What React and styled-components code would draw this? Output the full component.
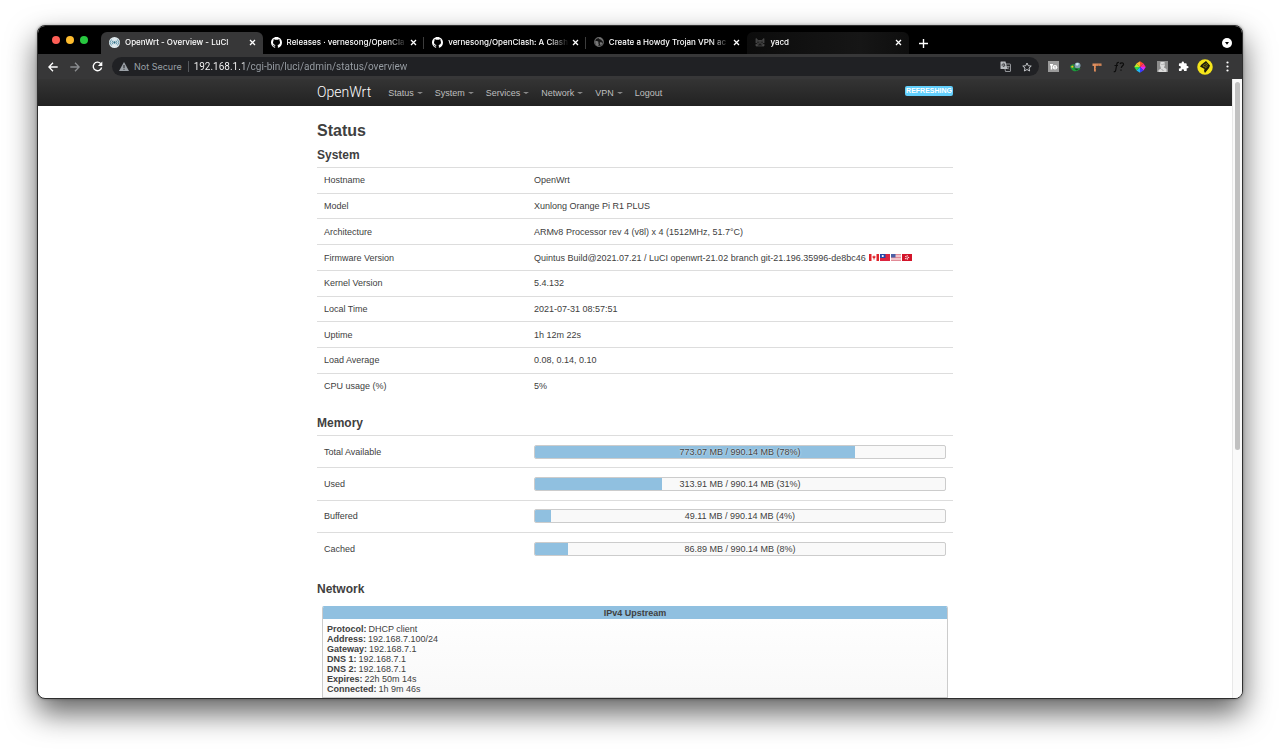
import React from "react";
import styled, { createGlobalStyle } from "styled-components";

const sans = '"Liberation Sans", Helvetica, Arial, sans-serif';
const ui = 'Inter, "Liberation Sans", sans-serif';

const GlobalStyle = createGlobalStyle`
  * { box-sizing: border-box; }
  body { margin: 0; background: #fff; font-family: ${sans}; font-size: 9px; line-height: 12px; color: #404040; }
  button { border: 0; padding: 0; margin: 0; background: none; color: inherit; font: inherit; cursor: pointer; }
  svg { display: block; }
  a { color: inherit; text-decoration: none; }
`;

const Desktop = styled.div`
  height: 100vh;
  padding: 25px 37px 50px;
  overflow: hidden;
`;

const Window = styled.div`
  display: flex;
  flex-direction: column;
  height: 100%;
  border: 1px solid #2e2e2e;
  border-radius: 8px;
  overflow: hidden;
  background: #fff;
  box-shadow: 0 14px 30px rgba(0, 0, 0, 0.62), 0 0 3px rgba(0, 0, 0, 0.35);
`;

const TabStrip = styled.header`
  flex: none;
  display: flex;
  align-items: flex-end;
  height: 28px;
  background: #000;
  color: #fff;
  font-family: ${ui};
`;

const Lights = styled.div`
  display: flex;
  gap: 6px;
  width: 63px;
  padding: 0 0 10px 14px;
`;

const Light = styled.button`
  width: 8px;
  height: 8px;
  border-radius: 50%;
  background: ${(p) => p.$color};
`;

const Tabs = styled.div`
  display: flex;
  flex: 0 1 808px;
`;

const tabBackground = {
  active: "#373738",
  hover: "linear-gradient(to right, #0c0c0c, #161616 70%, #0e0e0e)",
  idle: "transparent",
};

const Tab = styled.div`
  position: relative;
  flex: 1;
  min-width: 0;
  display: flex;
  align-items: center;
  height: 22px;
  padding: 0 6px 2px 8px;
  border-radius: 6px 6px 0 0;
  background: ${(p) => tabBackground[p.$state]};
`;

const TabDivider = styled.i`
  position: absolute;
  right: 0;
  top: 5px;
  width: 1px;
  height: 12px;
  background: #3c3c3c;
`;

const TabTitle = styled.button`
  flex: 1;
  min-width: 0;
  display: flex;
  align-items: center;
  gap: 5px;
  font-weight: 500;
  font-size: 8px;
  line-height: 14px;
  text-align: left;

  span {
    flex: 1;
    overflow: hidden;
    white-space: nowrap;
    margin-right: 2px;
    mask-image: linear-gradient(to right, #000 calc(100% - 20px), transparent);
  }
  svg { flex: none; }
`;

const IconButton = styled.button`
  flex: none;
  display: flex;
  align-items: center;
  justify-content: center;
  width: ${(p) => p.$width || 22}px;
  height: ${(p) => p.$height || 22}px;
  color: ${(p) => p.$color || "#fff"};
`;

const StripEnd = styled.div`
  flex: 1;
  display: flex;
  justify-content: space-between;
  padding: 0 4px 0 3px;
`;

const Toolbar = styled.div`
  flex: none;
  display: flex;
  align-items: center;
  height: 25px;
  padding: 0 4px;
  background: #373738;
  font-family: ${ui};
`;

const AddressBar = styled.form`
  flex: 1;
  min-width: 0;
  display: flex;
  align-items: center;
  height: 19px;
  margin: 0 4px;
  padding: 0 1px 0 7px;
  border-radius: 10px;
  background: #202124;
  color: #9aa0a6;
  font-size: 9px;
`;

const Security = styled.button`
  display: flex;
  align-items: center;
  gap: 5px;
  padding-right: 6px;
  border-right: 1px solid #55585c;
  line-height: 11px;
  white-space: nowrap;
`;

const Url = styled.input`
  flex: 1;
  min-width: 0;
  margin-left: 5px;
  padding: 0;
  border: 0;
  outline: 0;
  font: 10px/14px Roboto, sans-serif;
  color: #9aa0a6;
  background: linear-gradient(to right, #fff 50px, #9aa0a6 50px);
  background-clip: text;
  -webkit-text-fill-color: transparent;
`;

const Extensions = styled.div`
  flex: 0 0 195px;
  display: grid;
  grid-template-columns: repeat(9, 1fr);
  justify-items: center;
`;

const Viewport = styled.div`
  flex: 1;
  min-height: 0;
  display: flex;
`;

const Page = styled.div`
  flex: 1;
  min-width: 0;
  overflow: hidden;
`;

const ScrollTrack = styled.div`
  flex: none;
  width: 10px;
  padding: 3px 2px;
  border-left: 1px solid #e8e8e8;
  background: #fafafa;
`;

const ScrollThumb = styled.div`
  height: 60%;
  width: 5px;
  border-radius: 3px;
  background: #c1c1c1;
`;

const NavBar = styled.nav`
  height: 27px;
  background: linear-gradient(#343434, #222);
  color: #bfbfbf;
`;

const Container = styled.div`
  display: flex;
  align-items: center;
  width: 636px;
  max-width: 100%;
  height: 100%;
  margin: 0 auto;
`;

const Brand = styled.a`
  margin-right: 17px;
  padding-bottom: 2px;
  font: 300 14px/20px Roboto, sans-serif;
  color: #fff;
`;

const Menu = styled.ul`
  flex: 1;
  display: flex;
  gap: 12px;
  margin: 0;
  padding: 0;
  list-style: none;
`;

const MenuLink = styled.a`
  display: flex;
  align-items: center;
  gap: 3px;
`;

const Caret = styled.i`
  border: solid transparent;
  border-width: 2px 3px 0;
  border-top-color: #8a8a8a;
`;

const Badge = styled.button`
  padding: 0 1px;
  border-radius: 2px;
  background: #62cffc;
  color: #fff;
  font-weight: 700;
  font-size: 7px;
  line-height: 10px;
  margin-bottom: 3px;
`;

const Main = styled.main`
  width: 636px;
  max-width: 100%;
  margin: 0 auto;
  padding-top: 12px;
`;

const Title = styled.h2`
  margin: 0;
  font-size: 16px;
  line-height: 25px;
`;

const Section = styled.section`
  margin-bottom: 13px;
`;

const Heading = styled.h3`
  margin: 0;
  font-size: 12px;
  line-height: 24px;
`;

const Table = styled.table`
  width: 100%;
  height: ${(p) => p.$height}px;
  border-collapse: collapse;
  table-layout: fixed;

  th, td {
    padding: 0 7px;
    border-top: 1px solid #ddd;
    font-weight: 400;
    text-align: left;
    vertical-align: middle;
  }
  th { width: 33%; }
`;

const Value = styled.div`
  display: flex;
  align-items: center;
  gap: 3px;
`;

const Flags = styled.span`
  display: flex;
  gap: 1px;
`;

const Meter = styled.div`
  position: relative;
  height: 14px;
  border: 1px solid #ccc;
  border-radius: 2px;
  background: #f9f9f9;
  overflow: hidden;
`;

const MeterFill = styled.div`
  height: 100%;
  background: #90c0e0;
`;

const MeterText = styled.span`
  position: absolute;
  inset: 0;
  text-align: center;
  text-shadow: 0 0 2px #fff;
`;

const IfaceBox = styled.div`
  margin: 5px 5px 0;
  border: 1px solid #ccc;
  border-top-color: #90c0e0;
  border-radius: 2px 2px 0 0;
  background: linear-gradient(#fff, #f7f7f7);
`;

const IfaceHead = styled.div`
  background: #90c0e0;
  border-radius: 1px 1px 0 0;
  font-weight: 700;
  text-align: center;
`;

const IfaceList = styled.dl`
  margin: 0;
  padding: 5px 4px 3px;
  line-height: 10px;

  dt { font-weight: 700; }
  dd { margin: 0; }
  div { display: flex; gap: 2px; }
`;

const IfaceFoot = styled.div`
  height: 20px;
  border-top: 1px solid #ccc;
`;

const CloseIcon = () => (
  <svg width="7" height="7" viewBox="0 0 7 7" stroke="currentColor" strokeWidth="1.3" fill="none">
    <path d="M1 1l5 5M6 1l-5 5" />
  </svg>
);

const OpenWrtIcon = () => (
  <svg width="11" height="11" viewBox="0 0 24 24" fill="none">
    <circle cx="12" cy="12" r="12" fill="#dfe9ee" />
    <circle cx="12" cy="12" r="2.5" fill="#2f6f86" />
    <path d="M8.5 8a6 6 0 0 0 0 8M15.500 8a6 6 0 0 1 0 8M5.500 5.500a9.500 9.500 0 0 0 0 13M18.500 5.500a9.500 9.500 0 0 1 0 13" stroke="#4d8ba1" strokeWidth="1.800" />
  </svg>
);

const GithubIcon = () => (
  <svg width="11" height="11" viewBox="0 0 16 16" fill="#fff">
    <path d="M8 0C3.580 0 0 3.580 0 8c0 3.540 2.290 6.530 5.470 7.590.4.070.55-.17.55-.38 0-.19-.01-.82-.01-1.490-2.010.37-2.530-.49-2.690-.94-.09-.23-.48-.94-.82-1.130-.28-.15-.68-.52-.01-.53.63-.01 1.080.58 1.230.82.72 1.210 1.870.87 2.330.66.07-.52.28-.87.51-1.070-1.780-.2-3.640-.89-3.640-3.950 0-.87.31-1.590.82-2.150-.08-.2-.36-1.020.08-2.120 0 0 .67-.21 2.200.82a7.600 7.600 0 0 1 4 0c1.530-1.040 2.200-.82 2.200-.82.44 1.100.16 1.920.08 2.120.51.56.82 1.270.82 2.150 0 3.070-1.870 3.750-3.650 3.950.29.25.54.73.54 1.480 0 1.070-.01 1.930-.01 2.200 0 .21.15.46.55.38A8 8 0 0 0 16 8c0-4.420-3.580-8-8-8z" />
  </svg>
);

const GlobeIcon = () => (
  <svg width="10" height="10" viewBox="0 0 24 24">
    <circle cx="12" cy="12" r="10.500" fill="#151515" stroke="#6a6a6a" strokeWidth="2.500" />
    <path d="M3 9c3 1 5 0 7 2s-1 3 1 5-1 4-2 6c-4-2-7-6-6-13zM12 2c0 3 1 4 4 4s2 3 4 4 2-1 2 2C22 6 18 2 12 2zM14 13c3-1 5 1 7 2l-4 5c-2-1-4-5-3-7z" fill="#777" />
  </svg>
);

const CatIcon = () => (
  <svg width="10" height="10" viewBox="0 0 20 20">
    <path d="M2 18V3l4.500 4h7L18 3v15z" fill="#3a3a3a" stroke="#5c5c5c" strokeWidth="1.200" />
    <path d="M6 9.500v2.500M14 9.500v2.500M0 13h4M16 13h4M8 18v-3l2-1 2 1v3" fill="none" stroke="#0c0c0c" strokeWidth="1.600" />
  </svg>
);

const PlusIcon = () => (
  <svg width="9" height="9" viewBox="0 0 9 9" stroke="#fff" strokeWidth="1.400">
    <path d="M4.500 0v9M0 4.500h9" />
  </svg>
);

const TabSearchIcon = () => (
  <svg width="10" height="10" viewBox="0 0 10 10">
    <circle cx="5" cy="5" r="5" fill="#fff" />
    <path d="M3 4h4L5 6.700z" fill="#000" />
  </svg>
);

const Arrow = ({ back }) => (
  <svg width="10" height="10" viewBox="0 0 10 10" fill="none" stroke="currentColor" strokeWidth="1.300">
    <path d={back ? "M9.700 5H1M5 .8L.9 5 5 9.200" : "M.3 5H9M5 .8L9.100 5 5 9.200"} />
  </svg>
);

const ReloadIcon = () => (
  <svg width="11" height="11" viewBox="0 0 16 16" fill="none" stroke="currentColor" strokeWidth="2">
    <path d="M14 9.500A6.200 6.200 0 1 1 12.700 3.800" />
    <path d="M15 .8v6.400H8.600z" fill="currentColor" stroke="none" />
  </svg>
);

const WarningIcon = () => (
  <svg width="10" height="9" viewBox="0 0 20 18">
    <path d="M10 0l10 18H0z" fill="#9aa0a6" />
    <path d="M9 6h2v6H9zM9 13.500h2v2H9z" fill="#202124" />
  </svg>
);

const TranslateIcon = () => (
  <svg width="11" height="11" viewBox="0 0 22 22">
    <path d="M8 6h12a1 1 0 0 1 1 1v13a1 1 0 0 1-1 1h-9z" fill="none" stroke="#b9bcc0" strokeWidth="1.500" />
    <path d="M2 1h9l4 15H2a1 1 0 0 1-1-1V2a1 1 0 0 1 1-1z" fill="#b9bcc0" />
    <path d="M10 7H6.500M9.500 6A3 3 0 1 0 10 9H7" fill="none" stroke="#202124" strokeWidth="1.300" />
    <path d="M13 11h6M16 9.500V11M18 11c0 2-2 4-4 5M15 13l3 4" fill="none" stroke="#b9bcc0" strokeWidth="1.200" />
  </svg>
);

const StarIcon = () => (
  <svg width="10" height="10" viewBox="0 0 20 20" fill="none" stroke="#d4d6d9" strokeWidth="1.800">
    <path d="M10 2l2.500 5.500 6 .6-4.500 4 1.300 5.900L10 15l-5.300 3L6 12.100l-4.500-4 6-.6z" />
  </svg>
);

const FeedBadge = () => (
  <svg width="11" height="11" viewBox="0 0 22 22">
    <rect width="22" height="22" fill="#9b9b9b" />
    <path d="M4 6h6v3H8.500v8h-3V9H4z" fill="#fff" />
    <circle cx="14" cy="12.500" r="4.500" fill="#fff" />
    <path d="M12 11.500h4M13 14h3" stroke="#9b9b9b" strokeWidth="1.300" />
  </svg>
);

const DownloadGlobe = () => (
  <svg width="11" height="10" viewBox="0 0 22 20">
    <circle cx="15" cy="7" r="6" fill="#7d9fae" />
    <path d="M11 4c3-3 6-2 7 0l-4 4z" fill="#cfe6ef" />
    <path d="M0 10c1-4 5-6 9-5l-2 3 5 5 9-1c-2 6-12 9-17 4z" fill="#1c9a3c" />
    <path d="M2 9l4-2 1 3-3 2z" fill="#f1c21b" />
    <path d="M8 13l9 1-4 3z" fill="#0a4d1c" />
  </svg>
);

const RulerIcon = () => (
  <svg width="10" height="10" viewBox="0 0 20 20">
    <path d="M1 3h18v5H8v11H4V8H1z" fill="#dd8e5e" />
    <path d="M10 5v3M13 5v3M16 5v3M6 10h2M6 13h2M6 16h2" stroke="#7c4222" />
  </svg>
);

const FontIcon = () => (
  <svg width="12" height="12" viewBox="0 0 24 24" fill="none" stroke="#0d0d0d" strokeWidth="2.400">
    <path d="M12 3c-3-1-4 1-4.500 4L5.500 18c-.5 3-2 4-4 3M3 9h7M14 6c1-3 8-3 7 1-.6 2.500-4 3-4.500 7M16 17v2.500" />
  </svg>
);

const wheel = ["#ff4a2b", "#ff2b8a", "#d42bff", "#3b3bff", "#21b6f8", "#2bd94a", "#b8ea2b", "#ffb22b"];
const ColorWheel = () => (
  <svg width="12" height="12" viewBox="-12 -12 24 24">
    {wheel.map((c, i) => (
      <path key={c} d={i % 2 ? "M0 0L-7-7L0-11.500z" : "M0 0L0-11.500L7-7z"} fill={c} transform={`rotate(${Math.ceil(i / 2) * 90})`} />
    ))}
  </svg>
);

const GhostIcon = () => (
  <svg width="11" height="11" viewBox="0 0 22 22">
    <rect width="22" height="22" fill="#8d8d8d" />
    <path d="M7 2h8l1 6-2 5 5 3v6H3v-4l5-3-2-6z" fill="#dcdcdc" />
    <path d="M9 6l2 2M14 5v3M9 17l4 2" stroke="#8d8d8d" strokeWidth="1.500" />
  </svg>
);

const PuzzleIcon = () => (
  <svg width="11" height="11" viewBox="0 0 24 24" fill="#fff">
    <path d="M20.500 11H19V7a2 2 0 0 0-2-2h-4V3.500a2.500 2.500 0 0 0-5 0V5H4a2 2 0 0 0-2 2v3.800h1.500a2.700 2.700 0 0 1 0 5.400H2V20a2 2 0 0 0 2 2h3.800v-1.500a2.700 2.700 0 0 1 5.400 0V22H17a2 2 0 0 0 2-2v-4h1.500a2.500 2.500 0 0 0 0-5z" />
  </svg>
);

const Avatar = () => (
  <svg width="16" height="16" viewBox="0 0 32 32">
    <circle cx="16" cy="16" r="15.500" fill="#f5e51b" />
    <path d="M18 4l8 9-2 5-8 10-2-4 1-4-9-5 3-4z" fill="#1d1b0a" />
    <path d="M12 13l7-4 2 3-7 4zM16 18l5-3" stroke="#8d8412" strokeWidth="1.500" fill="none" />
  </svg>
);

const DotsIcon = () => (
  <svg width="3" height="11" viewBox="0 0 3 11" fill="#fff">
    <circle cx="1.500" cy="1.500" r="1.100" />
    <circle cx="1.500" cy="5.500" r="1.100" />
    <circle cx="1.500" cy="9.500" r="1.100" />
  </svg>
);

const FlagCanada = () => (
  <svg width="10" height="7" viewBox="0 0 20 14">
    <path fill="#fff" d="M0 0h20v14H0z" />
    <path fill="#e0242c" d="M0 0h5v14H0zM15 0h5v14h-5zM10 2l1 2.500L13.500 5 12 8.500l-1.500.5v3h-1V9L8 8.500 6.500 5 9 4.500z" />
  </svg>
);

const FlagTaiwan = () => (
  <svg width="10" height="7" viewBox="0 0 20 14">
    <path fill="#dc2440" d="M0 0h20v14H0z" />
    <path fill="#2747a8" d="M0 0h11v8H0z" />
    <circle cx="5.500" cy="4" r="2.200" fill="#fff" />
  </svg>
);

const FlagUsa = () => (
  <svg width="10" height="7" viewBox="0 0 20 14">
    <path fill="#fff" d="M0 0h20v14H0z" />
    <path stroke="#d6596a" strokeWidth="1.400" d="M0 1h20M0 4h20M0 7h20M0 10h20M0 13h20" />
    <path fill="#4a5fa5" d="M0 0h9v7H0z" />
  </svg>
);

const FlagHongKong = () => (
  <svg width="10" height="7" viewBox="0 0 20 14">
    <path fill="#d3142a" d="M0 0h20v14H0z" />
    <path fill="#fff" d="M10 6.500L9 3l3-.5zM10.500 6.500l3.500-1 .5 3zM10.500 7.500l2 3-3 1zM9.500 7.500L8 11 5.500 9zM9.500 6.500L6 6l1.500-2.500z" />
  </svg>
);

const tabs = [
  { title: "OpenWrt - Overview - LuCI", Icon: OpenWrtIcon, state: "active" },
  { title: "Releases · vernesong/OpenCla", Icon: GithubIcon, state: "idle", divider: true },
  { title: "vernesong/OpenClash: A Clash", Icon: GithubIcon, state: "idle", divider: true },
  { title: "Create a Howdy Trojan VPN ac", Icon: GlobeIcon, state: "idle" },
  { title: "yacd", Icon: CatIcon, state: "hover" },
];

const extensions = [
  ["Feed", FeedBadge],
  ["Download manager", DownloadGlobe],
  ["Page ruler", RulerIcon],
  ["Font finder", FontIcon],
  ["Colour picker", ColorWheel],
  ["Reader", GhostIcon],
  ["Extensions", PuzzleIcon],
  ["Profile", Avatar],
  ["Browser menu", DotsIcon],
];

const menu = [
  ["Status", true],
  ["System", true],
  ["Services", true],
  ["Network", true],
  ["VPN", true],
  ["Logout", false],
];

const system = [
  ["Hostname", "OpenWrt"],
  ["Model", "Xunlong Orange Pi R1 PLUS"],
  ["Architecture", "ARMv8 Processor rev 4 (v8l) x 4 (1512MHz, 51.7°C)"],
  ["Firmware Version", "Quintus Build@2021.07.21 / LuCI openwrt-21.02 branch git-21.196.35996-de8bc46", true],
  ["Kernel Version", "5.4.132"],
  ["Local Time", "2021-07-31 08:57:51"],
  ["Uptime", "1h 12m 22s"],
  ["Load Average", "0.08, 0.14, 0.10"],
  ["CPU usage (%)", "5%"],
];

const memory = [
  ["Total Available", "773.07 MB / 990.14 MB (78%)", 78],
  ["Used", "313.91 MB / 990.14 MB (31%)", 31],
  ["Buffered", "49.11 MB / 990.14 MB (4%)", 4],
  ["Cached", "86.89 MB / 990.14 MB (8%)", 8],
];

const upstream = [
  ["Protocol:", "DHCP client"],
  ["Address:", "192.168.7.100/24"],
  ["Gateway:", "192.168.7.1"],
  ["DNS 1:", "192.168.7.1"],
  ["DNS 2:", "192.168.7.1"],
  ["Expires:", "22h 50m 14s"],
  ["Connected:", "1h 9m 46s"],
];

function BrowserChrome() {
  return (
    <>
      <TabStrip>
        <Lights>
          <Light $color="#ff5f57" aria-label="Close window" />
          <Light $color="#febc2e" aria-label="Minimise window" />
          <Light $color="#28c840" aria-label="Zoom window" />
        </Lights>
        <Tabs>
          {tabs.map(({ title, Icon, state, divider }) => (
            <Tab key={title} $state={state}>
              <TabTitle>
                <Icon />
                <span>{title}</span>
              </TabTitle>
              <IconButton $width={9} $height={14} aria-label="Close tab">
                <CloseIcon />
              </IconButton>
              {divider && <TabDivider />}
            </Tab>
          ))}
        </Tabs>
        <StripEnd>
          <IconButton aria-label="New tab"><PlusIcon /></IconButton>
          <IconButton aria-label="Search tabs"><TabSearchIcon /></IconButton>
        </StripEnd>
      </TabStrip>
      <Toolbar>
        <IconButton aria-label="Back"><Arrow back /></IconButton>
        <IconButton $color="#8b8d90" aria-label="Forward"><Arrow /></IconButton>
        <IconButton aria-label="Reload"><ReloadIcon /></IconButton>
        <AddressBar onSubmit={(e) => e.preventDefault()}>
          <Security type="button">
            <WarningIcon />
            Not Secure
          </Security>
          <Url aria-label="Address" defaultValue="192.168.1.1/cgi-bin/luci/admin/status/overview" />
          <IconButton type="button" $height={19} aria-label="Translate"><TranslateIcon /></IconButton>
          <IconButton type="button" $height={19} aria-label="Bookmark"><StarIcon /></IconButton>
        </AddressBar>
        <Extensions>
          {extensions.map(([name, Icon]) => (
            <IconButton key={name} $width={16} aria-label={name}><Icon /></IconButton>
          ))}
        </Extensions>
      </Toolbar>
    </>
  );
}

export default function App() {
  return (
    <Desktop>
      <GlobalStyle />
      <Window>
        <BrowserChrome />
        <Viewport>
          <Page>
            <NavBar>
              <Container>
                <Brand href="#">OpenWrt</Brand>
                <Menu>
                  {menu.map(([label, caret]) => (
                    <li key={label}>
                      <MenuLink href="#">
                        {label}
                        {caret && <Caret />}
                      </MenuLink>
                    </li>
                  ))}
                </Menu>
                <Badge>REFRESHING</Badge>
              </Container>
            </NavBar>
            <Main>
              <Title>Status</Title>
              <Section>
                <Heading>System</Heading>
                <Table $height={231}>
                  <tbody>
                    {system.map(([label, value, flags]) => (
                      <tr key={label}>
                        <th scope="row">{label}</th>
                        <td>
                          <Value>
                            {value}
                            {flags && (
                              <Flags>
                                <FlagCanada />
                                <FlagTaiwan />
                                <FlagUsa />
                                <FlagHongKong />
                              </Flags>
                            )}
                          </Value>
                        </td>
                      </tr>
                    ))}
                  </tbody>
                </Table>
              </Section>
              <Section>
                <Heading>Memory</Heading>
                <Table $height={129}>
                  <tbody>
                    {memory.map(([label, text, percent]) => (
                      <tr key={label}>
                        <th scope="row">{label}</th>
                        <td>
                          <Meter>
                            <MeterFill style={{ width: `${percent}%` }} />
                            <MeterText>{text}</MeterText>
                          </Meter>
                        </td>
                      </tr>
                    ))}
                  </tbody>
                </Table>
              </Section>
              <Section>
                <Heading>Network</Heading>
                <IfaceBox>
                  <IfaceHead>IPv4 Upstream</IfaceHead>
                  <IfaceList>
                    {upstream.map(([label, value]) => (
                      <div key={label}>
                        <dt>{label}</dt>
                        <dd>{value}</dd>
                      </div>
                    ))}
                  </IfaceList>
                  <IfaceFoot />
                </IfaceBox>
              </Section>
            </Main>
          </Page>
          <ScrollTrack>
            <ScrollThumb />
          </ScrollTrack>
        </Viewport>
      </Window>
    </Desktop>
  );
}
